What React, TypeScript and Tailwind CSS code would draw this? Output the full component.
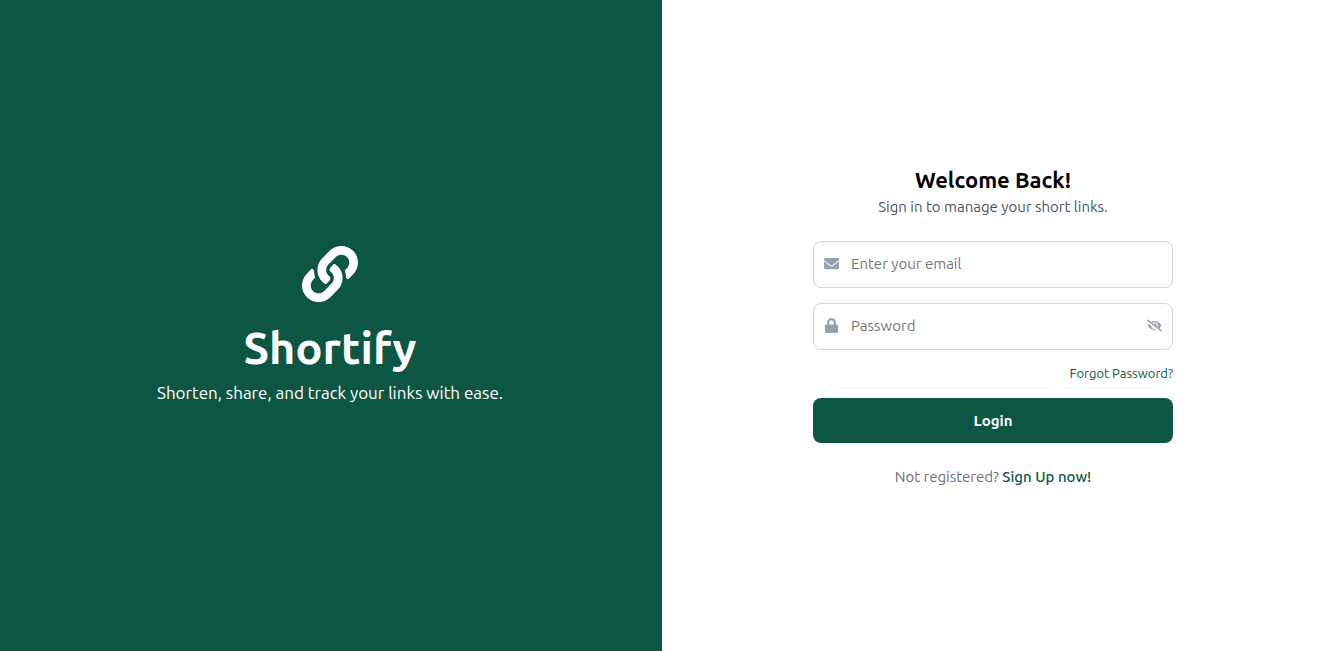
import React, { useState } from "react";
import { FaLink, FaEnvelope, FaLock, FaEyeSlash } from "react-icons/fa";

export default function App() {
  const [visible, setVisible] = useState(false);

  return (
    <div className="grid min-h-screen grid-cols-[662fr_660fr] bg-white font-['Ubuntu','Open_Sans',sans-serif]">
      <section className="flex flex-col items-center justify-center bg-[#0d5643] pr-0.5 pb-px text-white">
        <FaLink className="mb-[18px] size-14" />
        <h1 className="text-[45px] leading-[56px] font-semibold">Shortify</h1>
        <p className="mt-[5px] text-[17px] leading-6">Shorten, share, and track your links with ease.</p>
      </section>
      <main className="flex flex-col items-center justify-center pt-1 pl-0.5">
        <form className="flex w-full max-w-[360px] flex-col" onSubmit={(e) => e.preventDefault()}>
          <h2 className="text-center text-[22px] leading-7 font-semibold text-black">Welcome Back!</h2>
          <p className="mt-px text-center text-[15px] leading-6 text-gray-600">Sign in to manage your short links.</p>
          <div className="mt-[22px] flex h-[47px] items-center rounded-lg border border-gray-300 px-[10px] pb-0.5">
            <FaEnvelope className="size-[15px] text-gray-400" />
            <input aria-label="Email" type="email" placeholder="Enter your email" className="ml-3 h-full min-w-0 flex-1 text-[15px] outline-none placeholder:text-[#757575]" />
          </div>
          <div className="mt-[15px] flex h-[47px] items-center rounded-lg border border-gray-300 px-[10px] pb-0.5">
            <FaLock className="size-[15px] text-gray-400" />
            <input aria-label="Password" type={visible ? "text" : "password"} placeholder="Password" className="ml-3 h-full min-w-0 flex-1 text-[15px] outline-none placeholder:text-[#757575]" />
            <button type="button" aria-label="Show password" aria-pressed={visible} onClick={() => setVisible(!visible)} className="text-gray-400">
              <FaEyeSlash className="size-[15px]" />
            </button>
          </div>
          <a href="#" className="mt-[14px] self-end text-[13px] leading-[18px] text-[#0d5643]">Forgot Password?</a>
          <button type="submit" className="mt-4 h-[45px] rounded-lg bg-[#0d5643] pt-px text-[15px] font-semibold text-white">Login</button>
          <p className="mt-[22px] text-center text-[15px] leading-6 text-gray-500">Not registered? <a href="#" className="font-medium text-[#0d5643]">Sign Up now!</a></p>
        </form>
      </main>
    </div>
  );
}
